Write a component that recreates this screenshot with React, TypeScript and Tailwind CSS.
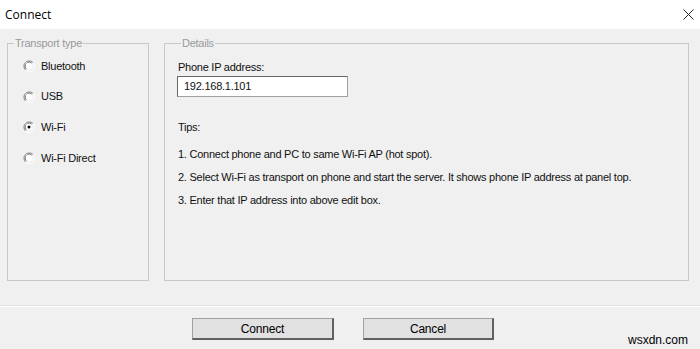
import React from "react";

function Radio({ checked }: { checked?: boolean }) {
  return (
    <svg width="12" height="12" viewBox="0 0 12 12" className="shrink-0">
      <path d="M10 2.5 A5 5 0 0 0 2.5 10" fill="none" stroke="#808080" strokeWidth="1" />
      <path d="M9 3.5 A3.6 3.6 0 0 0 3.5 9" fill="none" stroke="#404040" strokeWidth="1" />
      <path d="M2.5 10 A5 5 0 0 0 10 2.5" fill="none" stroke="#ffffff" strokeWidth="1" />
      <circle cx="6" cy="6" r="3.4" fill="#ffffff" />
      {checked && <circle cx="6" cy="6" r="1.5" fill="#000000" />}
    </svg>
  );
}

function RadioRow({ label, checked }: { label: string; checked?: boolean }) {
  return (
    <div className="flex h-[30.7px] items-center gap-[6px] pl-[13px]">
      <Radio checked={checked} />
      <span>{label}</span>
    </div>
  );
}

function Button({ children, className }: { children: React.ReactNode; className: string }) {
  return (
    <button
      className={`h-[22px] border border-[#a0a0a0] border-r-[2px] border-b-[2px] border-r-[#606060] border-b-[#606060] bg-[#e1e1e1] text-[12px] tracking-[-0.2px] text-black ${className}`}
    >
      {children}
    </button>
  );
}

export default function App() {
  return (
    <div className="relative flex h-[349px] w-[700px] flex-col overflow-hidden bg-[#f0f0f0] font-['Liberation_Sans',sans-serif] text-[11px] tracking-[-0.25px] text-[#111]">
      <div className="flex h-[29px] items-center justify-between bg-white pl-[5px] pr-[6px] font-['Open_Sans',sans-serif] text-[12px] tracking-normal text-black">
        <span>Connect</span>
        <svg width="11" height="11" viewBox="0 0 11 11">
          <path d="M0.5 0.5 L10.5 10.5 M10.5 0.5 L0.5 10.5" stroke="#222" strokeWidth="1" />
        </svg>
      </div>

      <div className="flex gap-[15px] pl-[7px] pr-[11px] pt-[6px]">
        <fieldset className="h-[246px] w-[142px] border border-[#c8c8c8] px-[2px]">
          <legend className="ml-[4px] px-[1px] text-[#9a9a9a]">Transport type</legend>
          <div className="-mt-[1px]">
            <RadioRow label="Bluetooth" />
            <RadioRow label="USB" />
            <RadioRow label="Wi-Fi" checked />
            <RadioRow label="Wi-Fi Direct" />
          </div>
        </fieldset>

        <fieldset className="h-[246px] flex-1 border border-[#c8c8c8] px-[12px]">
          <legend className="ml-[4px] px-[1px] text-[#9a9a9a]">Details</legend>
          <div className="pt-[7px] pl-[1px]">Phone IP address:</div>
          <div className="mt-[1px] flex h-[21px] w-[171px] items-center border border-[#a0a0a0] border-t-[#696969] border-l-[#696969] bg-white pl-[6px]">
            192.168.1.101
          </div>
          <div className="mt-[22px] flex flex-col gap-[6.5px] pl-[1px]">
            <div>Tips:</div>
            <div className="mt-[4px]">1. Connect phone and PC to same Wi-Fi AP (hot spot).</div>
            <div>
              2. Select Wi-Fi as transport on phone and start the server. It shows phone IP address at panel top.
            </div>
            <div>3. Enter that IP address into above edit box.</div>
          </div>
        </fieldset>
      </div>

      <div className="mt-[24px] h-[2px] border-t border-[#e3e3e3] border-b border-b-white" />

      <div className="flex items-start pl-[192px] pt-[11px]">
        <Button className="w-[142px]">Connect</Button>
        <div className="w-[29px]" />
        <Button className="w-[131px]">Cancel</Button>
        <span className="ml-auto mr-[12px] mt-[13px] text-[12px] tracking-normal text-black">
          wsxdn.com
        </span>
      </div>
    </div>
  );
}
